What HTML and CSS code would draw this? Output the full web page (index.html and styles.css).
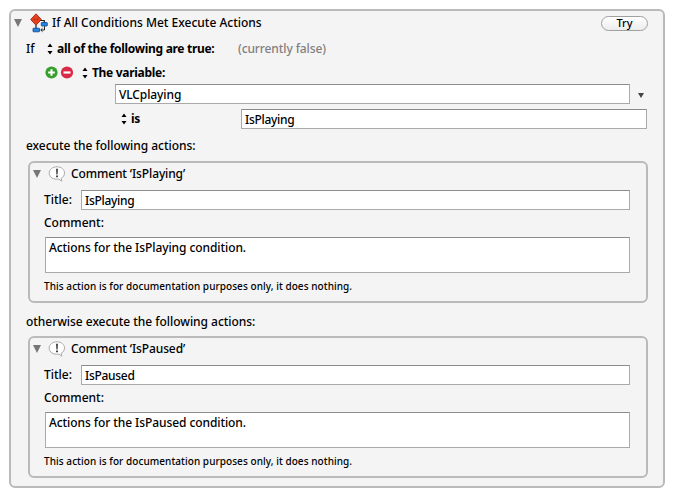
FILE: index.html
```html
<!DOCTYPE html>
<html lang="en">
<head>
  <meta charset="UTF-8">
  <title>If All Conditions Met Execute Actions</title>
  <link rel="stylesheet" href="styles.css">
</head>
<body>

  <div class="action">
    <div class="header">
      <span class="triangle"></span>
      <svg class="flow-icon" width="18" height="20" viewBox="0 0 18 20">
        <path d="M10 7.500h4.300v3M6 12v4" fill="none" stroke="#222" stroke-width="1.2"/>
        <path d="M6 .8L11.400 6.500 6 12.200.6 6.500z" fill="#e8401c" stroke="#8c2412" stroke-width=".8"/>
        <path d="M3.800 6.400h1.500M6.600 6h1.700" stroke="#8c2412"/>
        <rect x="11.300" y="9.500" width="6" height="3.500" rx=".6" fill="#2684e4" stroke="#123f80" stroke-width=".8"/>
        <rect x="3" y="15.200" width="6.500" height="3.600" rx=".6" fill="#2684e4" stroke="#123f80" stroke-width=".8"/>
        <path d="M14.500 13.300V17h-3.500M12.500 15.300L10.700 17l1.800 1.700" fill="none" stroke="#222"/>
      </svg>
      <span class="main-title">If All Conditions Met Execute Actions</span>
      <button class="try">Try</button>
    </div>

    <div class="row if-row">
      <span class="if">If</span>
      <svg class="stepper" width="6" height="12" viewBox="0 0 6 12"><path d="M3 .5L5.5 4h-5zM3 11.5L.5 8h5z"/></svg>
      <b class="all">all of the following are true:</b>
      <span class="status">(currently false)</span>
    </div>

    <div class="row variable-row">
      <svg class="plus-minus" width="29" height="13" viewBox="0 0 29 13">
        <circle cx="6.5" cy="6.5" r="6.1" fill="#36a02c"/>
        <path d="M6.5 3.2v6.6M3.2 6.5h6.6" stroke="#fff" stroke-width="2"/>
        <circle cx="22" cy="6.5" r="6.1" fill="#d92b48"/>
        <path d="M18.5 6.5h7" stroke="#fff" stroke-width="2.2"/>
      </svg>
      <svg class="stepper" width="6" height="12" viewBox="0 0 6 12"><path d="M3 .5L5.5 4h-5zM3 11.5L.5 8h5z"/></svg>
      <b>The variable:</b>
    </div>

    <div class="field-row">
      <div class="field variable-name">VLCplaying</div>
      <span class="dropdown"></span>
    </div>

    <div class="is-row">
      <svg class="stepper" width="6" height="12" viewBox="0 0 6 12"><path d="M3 .5L5.5 4h-5zM3 11.5L.5 8h5z"/></svg>
      <b class="is">is</b>
      <div class="field value">IsPlaying</div>
    </div>

    <div class="section-label first-label">execute the following actions:</div>

    <div class="comment-action">
      <div class="comment-header">
        <span class="triangle"></span>
        <svg class="bubble" width="18" height="17" viewBox="0 0 18 17">
          <path d="M9 .8c4.5 0 7.5 2.8 7.5 6.2 0 2.4-1.2 4.2-3.300 5.200l.6 3-3-2.100C5.500 13.800 1.200 11.500 1.200 7 1.200 3.600 4.500.8 9 .8z" fill="#fff" stroke="#aaa"/>
          <path d="M8.100 2.800h1.800l-.3 5.700h-1.200zM8.100 9.500h1.800v1.700H8.100z" fill="#333"/>
        </svg>
        <span class="comment-title">Comment ‘IsPlaying’</span>
      </div>
      <div class="title-row">
        <span class="title-label">Title:</span>
        <div class="field value">IsPlaying</div>
      </div>
      <div class="comment-label">Comment:</div>
      <div class="field comment-text">Actions for the IsPlaying condition.</div>
      <div class="note">This action is for documentation purposes only, it does nothing.</div>
    </div>

    <div class="section-label">otherwise execute the following actions:</div>

    <div class="comment-action">
      <div class="comment-header">
        <span class="triangle"></span>
        <svg class="bubble" width="18" height="17" viewBox="0 0 18 17">
          <path d="M9 .8c4.5 0 7.5 2.8 7.5 6.2 0 2.4-1.2 4.2-3.300 5.200l.6 3-3-2.100C5.500 13.800 1.200 11.500 1.200 7 1.200 3.600 4.500.8 9 .8z" fill="#fff" stroke="#aaa"/>
          <path d="M8.100 2.800h1.800l-.3 5.700h-1.200zM8.100 9.500h1.800v1.700H8.100z" fill="#333"/>
        </svg>
        <span class="comment-title">Comment ‘IsPaused’</span>
      </div>
      <div class="title-row">
        <span class="title-label">Title:</span>
        <div class="field value">IsPaused</div>
      </div>
      <div class="comment-label">Comment:</div>
      <div class="field comment-text">Actions for the IsPaused condition.</div>
      <div class="note">This action is for documentation purposes only, it does nothing.</div>
    </div>
  </div>

</body>
</html>
```
FILE: styles.css
```css
* {
  box-sizing: border-box;
}

body {
  margin: 0;
  padding: 9px;
  background: #fff;
  color: #000;
  font-family: "Noto Sans", "Open Sans", sans-serif;
  font-size: 12px;
  font-weight: 500;
  line-height: 20px;
  white-space: nowrap;
}

b {
  font-weight: 700;
  letter-spacing: -0.3px;
}

svg {
  flex: none;
}

.action {
  width: 656px;
  height: 479px;
  border: 2px solid #bababa;
  border-radius: 6px;
  background: #f4f4f4;
}

.header {
  display: flex;
  align-items: center;
  height: 24px;
  padding: 0 15px 0 3px;
}

.triangle {
  flex: none;
  border: solid transparent;
  border-width: 8px 4.5px 0;
  border-top-color: #777;
}

.flow-icon {
  margin-left: 8px;
}

.main-title {
  margin-left: 4px;
}

.try {
  width: 47px;
  height: 15px;
  margin-left: auto;
  padding: 0;
  border: 1px solid #a0a0a0;
  border-radius: 8px;
  background: linear-gradient(#fff, #ececec);
  color: #000;
  font: 500 11px/12px "Noto Sans", sans-serif;
}

.row {
  display: flex;
  align-items: center;
  height: 24px;
}

.if-row {
  margin-top: 2px;
  padding-left: 15px;
}

.if {
  width: 21px;
}

.stepper {
  margin-right: 4px;
}

.all {
  width: 181px;
}

.status {
  color: #808080;
  letter-spacing: -0.1px;
}

.variable-row {
  height: 23px;
  padding-left: 34px;
}

.plus-minus {
  margin-right: 8px;
}

.field {
  flex: 1;
  height: 20px;
  padding-left: 3px;
  border: 1px solid #aaa;
  border-top-color: #8c8c8c;
  background: #fff;
  line-height: 20px;
}

.variable-name {
  letter-spacing: -0.1px;
}

.value {
  letter-spacing: -0.3px;
}

.field-row {
  display: flex;
  align-items: center;
  padding: 0 19px 0 104px;
}

.dropdown {
  margin: 2px 0 0 8px;
  border: solid transparent;
  border-width: 5px 3px 0;
  border-top-color: #444;
}

.is-row {
  display: flex;
  align-items: center;
  margin-top: 5px;
  padding: 0 16px 0 110px;
}

.is {
  width: 110px;
}

.section-label {
  height: 33px;
  padding-left: 15px;
  line-height: 37px;
  letter-spacing: -0.04px;
}

.first-label {
  height: 32px;
  line-height: 34px;
}

.comment-action {
  width: 620px;
  height: 142px;
  margin-left: 17px;
  padding: 0 16px 0 14px;
  border: 2px solid #bababa;
  border-radius: 6px;
}

.comment-header {
  display: flex;
  align-items: center;
  height: 22px;
  margin-left: -12px;
}

.comment-header .triangle {
  margin-left: 1px;
}

.bubble {
  margin: 0 5px 0 7px;
}

.comment-title {
  letter-spacing: -0.12px;
}

.title-row {
  display: flex;
  align-items: center;
  margin-top: 5px;
}

.title-label {
  width: 37px;
}

.comment-label {
  height: 27px;
  line-height: 26px;
}

.comment-text {
  height: 36px;
  margin-left: 1px;
  letter-spacing: -0.08px;
}

.note {
  height: 26px;
  font-size: 10px;
  line-height: 27px;
  letter-spacing: 0.06px;
}
```
